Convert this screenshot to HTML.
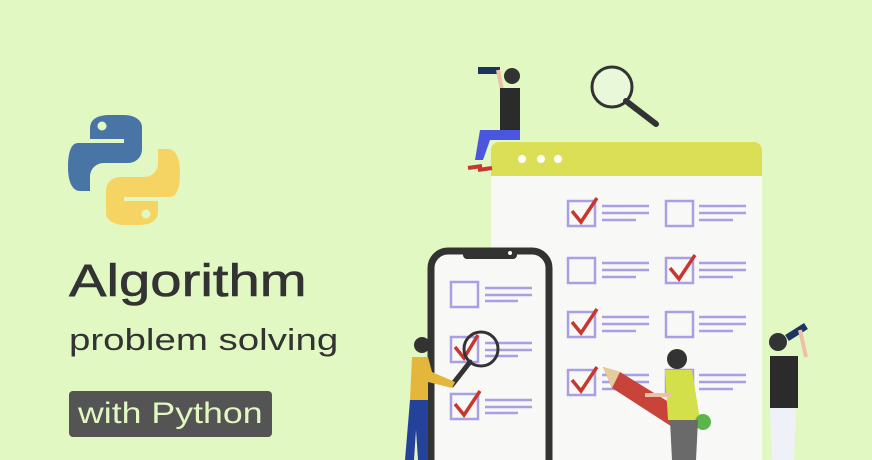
<!DOCTYPE html>
<html><head><style>
html,body{margin:0;width:872px;height:460px;overflow:hidden}
body{background:#e1f8c2;font-family:"Liberation Sans",sans-serif;position:relative}
.t{position:absolute;color:#333;white-space:nowrap;transform-origin:0 0}
</style></head><body>
<svg style="position:absolute;left:0;top:0" width="872" height="460">
<g transform="translate(68,115)">
<path d="M42 0 C28 0 22 5 22 14 V24 H56 V28 H10 C3 28 0 38 0 52 C0 68 5 76 12 76 H22 V62 C22 54 28 48 36 48 H60 C68 48 74 42 74 34 V12 C74 5 66 0 56 0 Z" fill="#4874a6"/>
<circle cx="34" cy="11" r="4.5" fill="#e1f8c2"/>
<path d="M70 110 C84 110 90 105 90 96 V86 H56 V82 H102 C109 82 112 72 112 58 C112 42 107 34 100 34 H90 V48 C90 56 84 62 76 62 H52 C44 62 38 68 38 76 V98 C38 105 46 110 56 110 Z" fill="#f6d464"/>
<circle cx="78" cy="99" r="4.5" fill="#e1f8c2"/>
</g>
<rect x="491" y="142" width="271" height="330" rx="8" fill="#f8f9f7"/>
<path d="M491 176 V150 a8 8 0 0 1 8 -8 H754 a8 8 0 0 1 8 8 V176 Z" fill="#dadf56"/>
<circle cx="522" cy="159" r="4" fill="#fff"/><circle cx="541" cy="159" r="4" fill="#fff"/><circle cx="558" cy="159" r="4" fill="#fff"/>
<g fill="none" stroke="#a99fe2" stroke-width="2.5">
<rect x="568" y="201" width="27" height="25"/><rect x="666" y="201" width="27" height="25"/>
<rect x="568" y="258" width="27" height="25"/><rect x="666" y="258" width="27" height="25"/>
<rect x="568" y="312" width="27" height="25"/><rect x="666" y="312" width="27" height="25"/>
<rect x="568" y="370" width="27" height="25"/><rect x="666" y="370" width="27" height="25"/>
<path d="M602 206H649M602 213H649M602 220H636M699 206H746M699 213H746M699 220H733
M602 263H649M602 270H649M602 277H636M699 263H746M699 270H746M699 277H733
M602 317H649M602 324H649M602 331H636M699 317H746M699 324H746M699 331H733
M602 375H649M602 382H649M602 389H636M699 375H746M699 382H746M699 389H733"/>
</g>
<g fill="none" stroke="#c8372f" stroke-width="3.5">
<path d="M572 211 L581 222 L597 198"/><path d="M670 268 L679 279 L695 255"/>
<path d="M572 322 L581 333 L597 309"/><path d="M572 380 L581 391 L597 367"/>
</g>
<circle cx="612" cy="87" r="20" fill="#e9f8d8" stroke="#333" stroke-width="3"/>
<path d="M626 101 L656 124" stroke="#333" stroke-width="6" stroke-linecap="round"/>
<rect x="431" y="251" width="118" height="240" rx="17" fill="#f8f9f7" stroke="#333" stroke-width="7"/>
<path d="M463 251 H517 V255 a4 4 0 0 1 -4 4 H467 a4 4 0 0 1 -4 -4Z" fill="#333"/>
<circle cx="510" cy="253" r="2" fill="#fff"/>
<g fill="none" stroke="#a99fe2" stroke-width="2.5">
<rect x="451" y="282" width="27" height="25"/><rect x="451" y="337" width="27" height="25"/><rect x="451" y="394" width="27" height="25"/>
<path d="M485 288H532M485 295H532M485 301H518M485 343H532M485 350H532M485 356H518M485 400H532M485 407H532M485 413H518"/>
</g>
<g fill="none" stroke="#c8372f" stroke-width="3.5">
<path d="M455 347 L464 358 L478 335"/><path d="M455 404 L464 415 L480 391"/>
</g>
<circle cx="481" cy="349" r="17" fill="none" stroke="#333" stroke-width="3"/>
<path d="M470 362 L452 385" stroke="#333" stroke-width="5" stroke-linecap="round"/>
<circle cx="422" cy="345" r="8" fill="#333"/>
<path d="M412 357 H428 L432 372 L455 382 L452 388 L428 382 L428 400 H410Z" fill="#e4b63b"/>
<path d="M410 400 H428 L428 460 H418 L416 430 L414 460 H405Z" fill="#25429a"/>
<circle cx="512" cy="76" r="8" fill="#333"/>
<rect x="478" y="67" width="22" height="7" fill="#1c3560"/>
<path d="M498 70 L502 90" stroke="#efc0a8" stroke-width="4"/>
<rect x="500" y="88" width="20" height="44" fill="#2b2b2b"/>
<path d="M520 130 H480 L475 160 H483 L490 140 H520Z" fill="#4a55e0"/>
<path d="M468 168 L482 166 M478 170 L492 168" stroke="#c8372f" stroke-width="4"/>
<path d="M603 367 L620 372 L690 415 L680 432 L612 388Z" fill="#c8443a"/>
<path d="M603 367 L620 372 L612 388Z" fill="#e5cc9a"/>
<circle cx="677" cy="359" r="10" fill="#333"/>
<path d="M665 370 H692 L700 420 H668Z" fill="#d4e04a"/>
<circle cx="703" cy="422" r="8" fill="#5bb54b"/>
<path d="M670 420 H698 L696 460 H672Z" fill="#6a6a6a"/>
<path d="M645 395 L672 395" stroke="#efc0a8" stroke-width="4"/>
<circle cx="778" cy="342" r="9" fill="#333"/>
<path d="M787 338 L806 326" stroke="#1c3560" stroke-width="7"/>
<path d="M800 330 L806 357" stroke="#efc0a8" stroke-width="4"/>
<rect x="770" y="356" width="28" height="52" fill="#2b2b2b"/>
<path d="M770 408 H796 L794 460 H772Z" fill="#eef2f8"/>
</svg>
<div class="t" style="left:69px;top:256px;font-size:45px;line-height:50px;transform:scaleX(1.25);-webkit-text-stroke:0.6px #333">Algorithm</div>
<div class="t" style="left:69px;top:322px;font-size:31px;line-height:36px;transform:scaleX(1.24)">problem solving</div>
<div style="position:absolute;left:69px;top:391px;width:203px;height:46px;background:#545454;border-radius:4px"></div>
<div class="t" style="left:78px;top:396px;font-size:30px;line-height:36px;color:#e1f8c2;transform:scaleX(1.19)">with Python</div>
</body></html>
